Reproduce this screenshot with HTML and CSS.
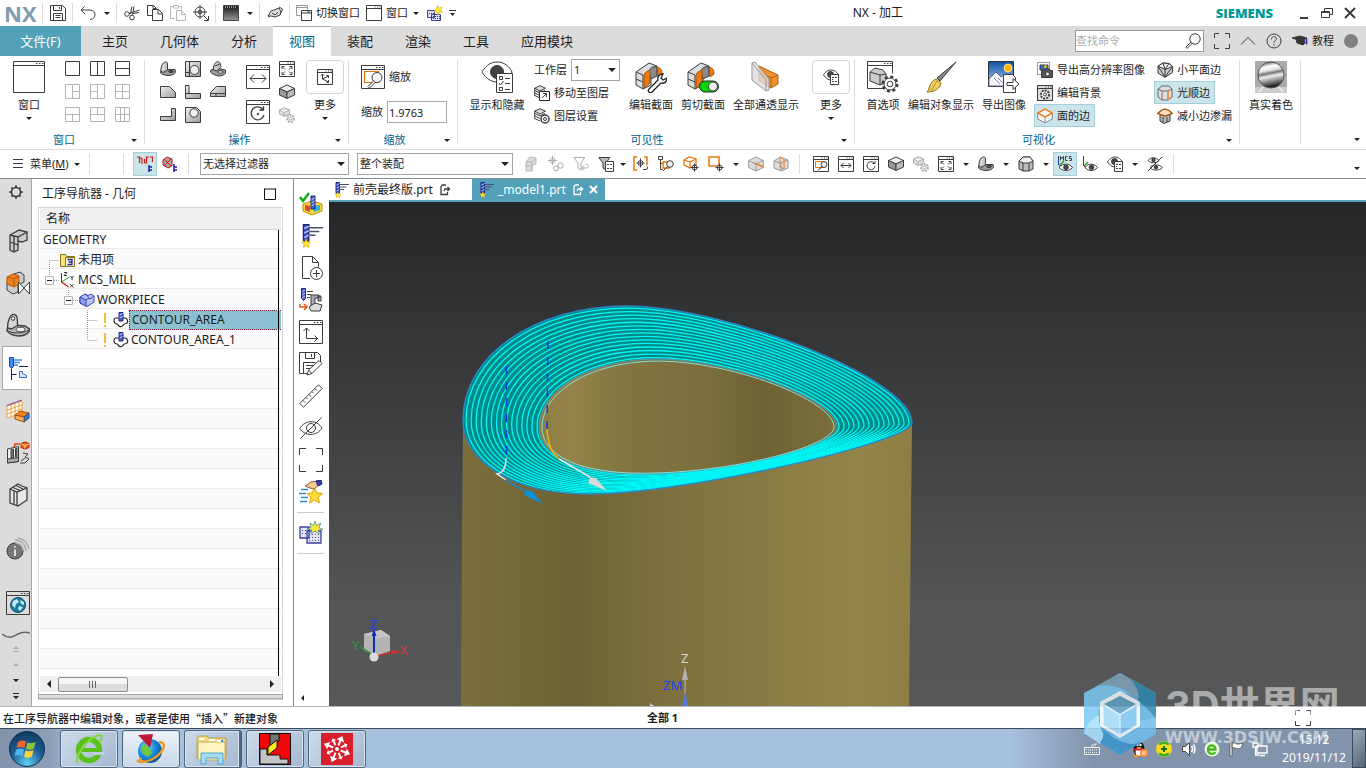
FILE: index.html
```
<!doctype html>
<html lang="zh-CN">
<head>
    <meta charset="UTF-8">
    <meta name="viewport" content="width=device-width, initial-scale=1.0">
    <title>NX - 加工</title>
    <link rel="stylesheet" href="styles.css">
</head>
<body>
<!-- icon sprite -->
<svg class="sprite" aria-hidden="true">
    <defs>
        <linearGradient id="g-dark" x1="0" y1="0" x2="0" y2="1"><stop offset="0" stop-color="#111"/><stop offset="1" stop-color="#999"/></linearGradient>
        <linearGradient id="g-metal" x1="0" y1="0" x2="1" y2="1"><stop offset="0" stop-color="#f2f2f2"/><stop offset="1" stop-color="#9a9a9a"/></linearGradient>
        <linearGradient id="g-sky" x1="0" y1="0" x2="0" y2="1"><stop offset="0" stop-color="#0f4fa8"/><stop offset="1" stop-color="#a9d6f5"/></linearGradient>
        <linearGradient id="g-chrome" x1="0" y1="0" x2=".2" y2="1"><stop offset="0" stop-color="#333"/><stop offset=".25" stop-color="#fff"/><stop offset=".4" stop-color="#ddd"/><stop offset=".5" stop-color="#777"/><stop offset=".62" stop-color="#eee"/><stop offset="1" stop-color="#222"/></linearGradient>
        <radialGradient id="g-orb" cx=".5" cy=".9" r=".9"><stop offset="0" stop-color="#5fd0f5"/><stop offset=".5" stop-color="#1d5f94"/><stop offset="1" stop-color="#12395f"/></radialGradient>
        <radialGradient id="g-globe" cx=".35" cy=".35" r=".8"><stop offset="0" stop-color="#7fd8ff"/><stop offset=".5" stop-color="#1787d8"/><stop offset="1" stop-color="#0a3f86"/></radialGradient>
    </defs>

    <symbol id="frame" viewBox="0 0 24 24"><path d="M.5.5h23v23H.5zM.5 4.5h23"/><path d="M15 2.5h1.5M18 2.5h1.5M21 2.5h1.5"/></symbol>
    <symbol id="frame-s" viewBox="0 0 16 16"><path d="M.5.5h15v15H.5zM.5 3.5h15"/><path d="M8.500 2h1M11 2h1M13.500 2h1"/></symbol>
    <symbol id="frame-l" viewBox="0 0 32 32"><path d="M.5.5h31v31H.5zM.5 4.500h31"/><path d="M23 2.500h1.500M26 2.500h1.500M29 2.500h1.500"/></symbol>

    <symbol id="save" viewBox="0 0 16 16"><path d="M.5.5h12l3 3v12H.5zM3.500.5v5h8v-5M9.500 2v2M3.500 15.500v-7h9v7M5.500 10.500h5M5.500 12.500h5"/></symbol>
    <symbol id="undo" viewBox="0 0 16 16"><path d="M4.500 1.500L1 5l4 4M1 5h9c3.500 0 5 2.500 5 4.500S13.500 14.500 10 14.500"/></symbol>
    <symbol id="cut" viewBox="0 0 16 16"><path d="M8 1.500L6.500 9M15.500 5L5 8.500M10 1.500L8.500 9.500M15 7.500l-6 1"/><circle cx="3" cy="9" r="2.300"/><circle cx="8" cy="12.500" r="2.300"/></symbol>
    <symbol id="copy" viewBox="0 0 16 16"><path d="M5.500 10.500h-5V.5h6l3 3v1M6 .5v3h3"/><path d="M5.500 4.500h6l4 4v7h-10zM11 4.500V9h4.500"/></symbol>
    <symbol id="paste" viewBox="0 0 16 16"><path stroke="#b4b4b4" d="M4.500 13.500h-4v-12h3M9.500 1.500h2v3M3.500.5h5v2.500h-5zM6.500 5.500h5l4 4v6h-9zM11.500 5.500v4h4"/></symbol>
    <symbol id="target" viewBox="0 0 16 16"><circle cx="7" cy="7" r="5"/><circle cx="7" cy="7" r="2"/><path d="M7 0v14M0 7h14M10 10l5 5M15.500 11v4.500H11"/></symbol>
    <symbol id="win-dark" viewBox="0 0 16 16"><path fill="url(#g-dark)" stroke="#444" d="M.5.5h15v15H.5z"/><path stroke="#fff" d="M2 2h12" stroke-dasharray="1 1"/></symbol>
    <symbol id="hand" viewBox="0 0 16 16"><path fill="#ddd" d="M1 11l3-5 3-1 5-2 2 4-1 3-5 2-4-1z"/><path d="M12 2l3.500 2-1.500 4M5 8l3 2 3-3M1 11l2 1"/></symbol>
    <symbol id="switch" viewBox="0 0 16 16"><path stroke="#999" d="M4.500 10.500h-4V.5h11v4M.5 2.500h11"/><path d="M5.500 5.500h10v10h-10zM5.500 8h10M11 7h3" /></symbol>
    <symbol id="newwin" viewBox="0 0 16 16"><path stroke="#3a3f9c" fill="#dfe2f8" d="M.5 5.500h7v7h-7zM4.500 9.500h9v6h-9z"/><path stroke="#3a3f9c" stroke-dasharray="1 1" d="M2 8.500h5M6 11.500h7M6 13.500h7"/><path fill="#ffe43c" stroke="#c9a400" stroke-width=".5" d="M10.500 0l1.200 3L15 2l-1.500 3L16 7.500l-3.500-.3L11 10 9.500 7 6.500 6.500 9 4.500z"/></symbol>
    <symbol id="more" viewBox="0 0 8 8"><path d="M0 1.500h7"/><path fill="#222" stroke="none" d="M1 4h5L3.500 7z"/></symbol>
    <symbol id="expand" viewBox="0 0 16 16"><path d="M.5 5V.5H5M11 .5h4.500V5M15.500 11v4.500H11M5 15.500H.5V11"/></symbol>
    <symbol id="lens" viewBox="0 0 16 16"><circle cx="10" cy="6" r="5.200"/><path d="M6 9L.8 14.200l1.200 1.200L7.300 10.300"/></symbol>
    <symbol id="chevron" viewBox="0 0 16 16"><path d="M1 11.500L8 4.500l7 7"/></symbol>
    <symbol id="help" viewBox="0 0 16 16"><circle cx="8" cy="8" r="7"/><path d="M5.500 6.500c0-4 5-3.500 5-.8C10.500 7.500 8 7.500 8 9.800M8 11v1.500"/></symbol>
    <symbol id="cap" viewBox="0 0 16 16"><path fill="#333" d="M0 5l8-2 7 2-6 3z"/><path fill="#333" d="M4 6l1 4 6 2 2-2-1-4z"/><path stroke="#22a" stroke-width="1.500" d="M14.500 5.500v6"/></symbol>

    <!-- layouts -->
    <symbol id="l1" viewBox="0 0 16 16"><path d="M.5.5h14v14H.5z"/></symbol>
    <symbol id="l2" viewBox="0 0 16 16"><path d="M.5.5h14v14H.5zM7.500.5v14"/></symbol>
    <symbol id="l3" viewBox="0 0 16 16"><path d="M.5.5h14v14H.5zM.5 7.500h14"/></symbol>
    <symbol id="l4" viewBox="0 0 16 16"><path d="M.5.5h14v14H.5zM7.500.5v14M7.500 7.500h7"/></symbol>
    <symbol id="l5" viewBox="0 0 16 16"><path d="M.5.5h14v14H.5zM7.500.5v14M.5 7.500h7"/></symbol>
    <symbol id="l6" viewBox="0 0 16 16"><path d="M.5.5h14v14H.5zM7.500.5v14M.5 7.500h14"/></symbol>
    <symbol id="l7" viewBox="0 0 16 16"><path d="M.5.5h14v14H.5zM.5 7.500h14M7.500 7.500v7"/></symbol>
    <symbol id="l8" viewBox="0 0 16 16"><path d="M.5.5h14v14H.5zM.5 7.500h14M7.500.5v7"/></symbol>
    <symbol id="l9" viewBox="0 0 16 16"><path d="M.5.5h14v14H.5zM.5 7.500h14M5.500.5v14M9.500.5v14"/></symbol>

    <!-- orientation -->
    <symbol id="v-tri" viewBox="0 0 16 16"><path fill="#9a9a9a" d="M.5 10.500l5-2H15l.5 2.500c-1 2.500-4 3.500-7.500 3.500S1.500 13 .5 12z"/><path fill="#c8c8c8" d="M.8 10C1 6 2 1.500 5.500 1c1.500 0 2 .5 2 2v6L3 11.500z"/><path stroke="#eee" d="M3 9c.3-3 .5-5 2-6.500"/><ellipse cx="11" cy="10.500" rx="2.500" ry="1" fill="#555"/></symbol>
    <symbol id="v-top" viewBox="0 0 16 16"><path fill="url(#g-metal)" d="M.5.5h15v15H.5z"/><path d="M4.500.5v15M.5 11.500h4"/><circle cx="9.500" cy="9" r="4.500" fill="#eee"/></symbol>
    <symbol id="v-iso" viewBox="0 0 16 16"><path fill="#9a9a9a" d="M1 9l5-2 9.500 2v3c-1 2-4 3-6.500 3S2 13 .5 11z"/><path fill="#c8c8c8" d="M3.500 9C3 5 5 1 7.500.5c2 0 3 2 3.500 5L7 10z"/><ellipse cx="10.500" cy="11" rx="2.500" ry="1.300" fill="#eee"/><path d="M5 5l5-2"/></symbol>
    <symbol id="v-front" viewBox="0 0 16 16"><path fill="url(#g-metal)" d="M.5 2.500h9l6 6v5H.5z"/></symbol>
    <symbol id="v-left" viewBox="0 0 16 16"><path fill="url(#g-metal)" d="M.5 1.500h3.500v8h11.500v5H.5zM.5 9.500H4"/></symbol>
    <symbol id="v-right" viewBox="0 0 16 16"><path fill="url(#g-metal)" d="M6.500 2.500h9v10H.5v-4z"/><path d="M.5 9.500h15M6 9.500v3"/></symbol>
    <symbol id="v-back" viewBox="0 0 16 16"><path fill="url(#g-metal)" d="M11.500 1.500h4v12H.5v-4h11z"/></symbol>
    <symbol id="v-bottom" viewBox="0 0 16 16"><path fill="url(#g-metal)" d="M.5.5h11l4 4v11H.5z"/><circle cx="9" cy="6" r="4.200" fill="#eee"/></symbol>
    <symbol id="fitwidth" viewBox="0 0 24 24"><use href="#frame"/><path d="M4 13.500h16M8 9.500l-4 4 4 4M16 9.500l4 4-4 4"/></symbol>
    <symbol id="rotate" viewBox="0 0 24 24"><use href="#frame"/><path stroke-width="1.300" d="M17 9.500A6.500 6.500 0 1 0 18 15M17.500 6v4h-4"/><circle cx="12" cy="14" r=".8" fill="#333"/></symbol>
    <symbol id="fit" viewBox="0 0 16 16"><use href="#frame-s"/><path d="M3 8V5.500h2.500M10.500 5.500H13V8M13 11v2.500h-2.500M5.500 13.500H3V11M4 6.500l2 2M12 6.500l-2 2M4 12.500l2-2M12 12.500l-2-2"/></symbol>
    <symbol id="cube" viewBox="0 0 16 16"><path fill="#eee" d="M8 1l7.500 3.500L8 8 .5 4.500z"/><path fill="#999" d="M.5 4.500L8 8v6.500L.5 11z"/><path fill="#bbb" d="M15.500 4.500L8 8v6.500l7.500-3.500z"/></symbol>
    <symbol id="cube-gear" viewBox="0 0 16 16"><g stroke="#b0b0b0"><path fill="#ddd" d="M5.500.7L10.500 3v4L5 9.500.5 7V3zM.5 3L5 5.500 10.500 3M5 5.500v4"/><circle cx="11.500" cy="11.500" r="3.500" fill="#eee" stroke-dasharray="2 1" stroke-width="2"/><circle cx="11.500" cy="11.500" r="1.500" fill="#fff"/></g></symbol>
    <symbol id="axes" viewBox="0 0 16 16"><use href="#frame-s"/><path d="M5.500 5v5l6 3M5.500 10l6-3M4 6.500l1.500-1.500L7 6.500M9.500 13.500h2v-2.500M9.500 6.500h2V9"/></symbol>
    <symbol id="zoom" viewBox="0 0 24 24"><use href="#frame"/><path stroke="#e8770c" stroke-width="1.200" d="M3.500 6.500h14v11h-14z"/><circle cx="16" cy="12.500" r="5" fill="#f4f4f4"/><path fill="#fff" d="M12.500 16L7 21.500l1.500 1.500 5.500-5.500"/></symbol>

    <!-- visibility -->
    <symbol id="eye-list" viewBox="0 0 32 32"><path fill="#fff" d="M1 11C6 3 11 1 16 1s11 2 15 10c-4 7-10 10-15 10S5 18 1 11z"/><circle cx="16" cy="11" r="6.500" fill="#444"/><path fill="#fff" d="M15.500 12.500h16v19h-16z"/><path d="M18.500 15.500h3v3h-3zM24 17.500h5M18 22l1.500 2 3-4M24 22.500h5M18.500 26.500h3v3h-3zM24 28.500h5"/></symbol>
    <symbol id="eye-list-s" viewBox="0 0 16 16"><path fill="#fff" d="M.5 6C3 2 5.500 1 8 1s5 1 7.500 5c-2 3.500-5 5-7.500 5S3 9.500.5 6z"/><circle cx="7.500" cy="5.500" r="3" fill="#444"/><path fill="#fff" d="M7.500 5.500h8v10h-8z"/><path d="M9 8.500h2M12 8.500h2M9 10.500h1M9 12.500h2M12 12.500h2"/></symbol>
    <symbol id="layers-move" viewBox="0 0 16 16"><path fill="#ddd" d="M6 .7l5.500 2.500L6 6 .7 3.200zM.7 5.500L6 8l5-2.500M.7 8L6 10.500M.7 10.500L6 13M.7 3v8"/><path fill="#fff" stroke="#222" d="M5.500 6.500h10v9h-10z"/><path d="M8 13l4-4M9 8.500h3.500V12"/></symbol>
    <symbol id="layers-set" viewBox="0 0 16 16"><path fill="#ddd" d="M6 .7l5.500 2.500L6 6 .7 3.200zM.7 5.500L6 8l5-2.500M.7 8L6 10.500M.7 10.500L6 13M.7 3v8"/><circle cx="11" cy="11" r="4" fill="#fff" stroke-width="1.500"/><circle cx="11" cy="11" r="1.500"/></symbol>
    <symbol id="section" viewBox="0 0 32 32"><path fill="#ddd" d="M1 11L14 2l8 3v8l-6 3v8l-8 4-7-4z"/><path fill="#8a8a8a" d="M14 12c0-6 5-7 8-6v9l-6 3z"/><path d="M1 11l7 3v14M1 18l7 3"/><path fill="#e87a1a" stroke="#a85000" d="M9 15c0-3 3-5 6-6v13l-6 5zM22 6c4 1 5 3 5 7l-4 3z"/></symbol>
    <symbol id="section-edit" viewBox="0 0 32 32"><use href="#section"/><path fill="#fff" stroke="#222" stroke-width="1.300" d="M14 28l9-9c-1-4 2-6 5-6l-2 4 2 2 4-2c0 4-3 6-6 5l-9 9c-2 2-5-1-3-3z"/></symbol>
    <symbol id="section-cut" viewBox="0 0 32 32"><use href="#section"/><rect x="12.500" y="20" width="19" height="11" rx="5.500" fill="#0ad20a" stroke="#222"/><circle cx="26" cy="25.500" r="4.500" fill="#eee"/></symbol>
    <symbol id="translucent" viewBox="0 0 32 32"><path fill="#f09030" stroke="#b86010" d="M9 5l19 9v9l-7 4L9 20z"/><path stroke="#b86010" d="M21 27V17l7-3M9 10l12 7"/><path fill="#ddd" fill-opacity=".8" stroke="#999" d="M2 2l3-1 14 17v11l-3 1L2 19z"/><path stroke="#999" d="M2 2l14 17v11"/></symbol>

    <!-- visualization -->
    <symbol id="prefs" viewBox="0 0 32 32"><path d="M16 27.500H.5V.5h25v12M.5 4.500h25"/><path d="M17 2.500h1.500M20 2.500h1.500M23 2.500h1.500"/><path fill="#ccc" d="M3 11l5-4 8 2 3 4v9l-6 2-10-4z"/><path d="M3 11l10 3 6-1M13 14v10"/><circle cx="23" cy="23" r="7" fill="#fff" stroke-width="3" stroke-dasharray="3 2.500"/><circle cx="23" cy="23" r="6" fill="#fff"/><circle cx="23" cy="23" r="2.800"/></symbol>
    <symbol id="brush" viewBox="0 0 32 32"><path fill="#888" d="M31 1L15 20l-3-3z"/><path fill="#eed060" stroke="#8a6a10" d="M11 18l5 4c-1 6-7 9-14 9 3-3 2-10 9-13z"/><path stroke="#b08a20" d="M12 20c-2 3-3 6-6 9"/></symbol>
    <symbol id="export" viewBox="0 0 32 32"><path fill="url(#g-sky)" stroke="#333" d="M.5.5h25v25H.5z"/><circle cx="20" cy="7" r="4" fill="#ffb400" stroke="#f7e08a"/><path fill="#f4f6fa" stroke="#668" d="M1 18l7-7 5 5 4-3 8 7v5H1z"/><path stroke="#88a" d="M6 17l6 6M10 17l5 5"/><path fill="#fff" d="M15.500 13.500h9l3 3v15h-12z"/><path fill="#fff" d="M19 21.500h6v-4l6 5.500-6 5.500v-4h-6z"/></symbol>
    <symbol id="cam" viewBox="0 0 16 16"><path stroke-dasharray="1 1" d="M.5.5h12v12H.5z"/><path fill="#2a6fc0" d="M3 3h8v5H3z"/><circle cx="8.500" cy="4.500" r="1.500" fill="#ffb400" stroke="none"/><path fill="#555" d="M4.500 8.500h3l1-1.500h4l1 1.500h2v7h-11z"/><circle cx="10.500" cy="12" r="2" fill="#eee"/></symbol>
    <symbol id="bgedit" viewBox="0 0 16 16"><path fill="#ddd" d="M.5.5h15v15H.5z"/><use href="#frame-s"/><circle cx="8" cy="9.500" r="4" fill="#fff" stroke-width="2" stroke-dasharray="2 1"/><circle cx="8" cy="9.500" r="1.500"/></symbol>
    <symbol id="face-edge" viewBox="0 0 16 16"><path fill="#f7f7f7" stroke="#888" d="M.7 5v6L8 15l7.300-4V5L8 9z"/><path stroke="#888" d="M8 9v6"/><path fill="#fff" stroke="#f08020" stroke-width="1.500" d="M.8 5L8 1l7.200 4L8 9z"/></symbol>
    <symbol id="facet" viewBox="0 0 16 16"><path fill="#ccc" d="M6 1l6 .5 3.500 3v6L8 15.300 1 11.200v-7z"/><path fill="#eee" d="M1 4.200L6 1l6 .5 3.500 3L8 7.500z"/><path d="M8 7.500v7.800M1 4.200L8 15M15.500 4.500L8 15M6 1l2 6.500L12 1.500"/></symbol>
    <symbol id="smooth" viewBox="0 0 16 16"><path fill="#ddd" stroke="#666" d="M1 4l4-3h7l3 3v8l-4 3H5l-4-3z"/><path stroke="#666" d="M1 4l4 2h6l4-2"/><path stroke="#f08020" stroke-width="1.500" d="M11 6v9"/><path stroke="#777" d="M5 6v9"/></symbol>
    <symbol id="bleed" viewBox="0 0 16 16"><path fill="#bbb" d="M3 7v6l4 2.500 6-2.500V7"/><path fill="#f8dcc0" stroke="#a04a00" stroke-width="1.300" d="M.8 5.500l3.200-3L8 1l4 1.500 3.200 3L8 8z"/><path d="M6 9v5M10 9v5"/></symbol>
    <symbol id="sphere" viewBox="0 0 32 32"><path fill="#aaa" stroke="none" d="M0 0h32v32H0z"/><path fill="#ccc" stroke="none" d="M0 26h32v6H0z"/><circle cx="16" cy="14" r="13" fill="url(#g-chrome)" stroke="#555"/><path stroke="#eee" stroke-width="1.500" d="M8 26l-4 5M24 26l4 5"/></symbol>

    <!-- selection bar -->
    <symbol id="tree-red" viewBox="0 0 16 16"><path stroke="#d01818" stroke-width="1.200" d="M0 1h2.500v6M5 2v6M3 2h2M7.500 7V3M7.500 7h2V1H12M13 1h2.500v5"/><path stroke="#1c1ca8" stroke-width="1.500" d="M12 9v7M12 11h3M12 14h3"/></symbol>
    <symbol id="tree-red2" viewBox="0 0 16 16"><path fill="#b8a0a0" stroke="#a02020" d="M1 4l4-3 5 2v7l-4 2-5-3z"/><path stroke="#d01818" d="M2 3l7 7M9 3L2 10"/><path stroke="#1c1ca8" stroke-width="1.500" d="M12 8v8M12 11h3M12 14h3"/></symbol>
    <symbol id="s-blocks" viewBox="0 0 16 16"><path fill="#ddd" stroke="#b8b8b8" d="M3 6l4-5 6 1v6l-4 1v6H3z"/><path stroke="#b8b8b8" d="M3 6h6l4-4M9 6v9M3 10h6"/></symbol>
    <symbol id="s-link" viewBox="0 0 16 16"><g stroke="#aaa"><circle cx="4.500" cy="4.500" r="2.500"/><path d="M4.500 0v9M0 4.500h9"/><circle cx="8" cy="12.500" r="2.500"/><circle cx="12.500" cy="9.500" r="2.700"/></g></symbol>
    <symbol id="s-filter" viewBox="0 0 16 16"><g stroke="#aaa"><path d="M.8 1.500h11L8 7v7l-3-2V7zM9.500 12h4c2.500 0 2-4-1-4M11 9.500L9 12l2 2.500"/></g></symbol>
    <symbol id="s-filter2" viewBox="0 0 16 16"><path fill="#bbb" d="M.8 1.500h11L8 7v7l-3-2V7z"/><path fill="#fff" d="M7.500 5.500h8v10h-8z"/><path d="M9 8.500h2M12 8.500h2M9 12.500h2M12 12.500h2"/></symbol>
    <symbol id="s-bracket" viewBox="0 0 16 16"><path stroke="#e8770c" stroke-width="1.500" d="M4 1H1v13h3M11 1h3v8"/><circle cx="7.500" cy="7" r="2.500"/><path d="M7.500 2.500v9M3.500 7h8M10 13.500h3c2 0 2-3 .5-3.500"/></symbol>
    <symbol id="s-tree" viewBox="0 0 16 16"><path d="M.5.5h4v3h-4zM2.500 3.500v10h2M2.500 7.500h2"/><path stroke="#e8770c" stroke-width="1.500" d="M5 6h6v6H5z"/><circle cx="12" cy="8" r="3.300" fill="#eee"/><path d="M9.500 10.500L5 15"/></symbol>
    <symbol id="s-cube" viewBox="0 0 16 16"><path stroke="#e8770c" stroke-width="1.300" d="M1 4l5-3 7 2v6l-6 3-6-3zM1 4l6 2 6-3M7 6v6"/><circle cx="11.500" cy="11.500" r="2.500" fill="#fff"/><path d="M11.500 7.500v8M7.500 11.500h8"/></symbol>
    <symbol id="s-box" viewBox="0 0 16 16"><path stroke="#e8770c" stroke-width="1.500" d="M1 1h10v9H1z"/><circle cx="11.500" cy="11.500" r="2.500" fill="#fff"/><path d="M11.500 7.500v8M7.500 11.500h8"/></symbol>
    <symbol id="s-edge" viewBox="0 0 16 16"><path fill="#ddd" stroke="#999" d="M.7 4.500L8 1l7.300 3.500v7L8 15 .7 11.500z"/><path stroke="#999" d="M.7 4.500L8 8M8 8v7M15 4.500L8 8"/><path stroke="#f08020" stroke-width="1.500" d="M7 7l8 4"/></symbol>
    <symbol id="s-face" viewBox="0 0 16 16"><path fill="#ddd" stroke="#999" d="M1 5l6-4 8 3v8l-7 3-7-3z"/><path stroke="#999" d="M1 5l7 2v8M8 7l7-3"/><path stroke="#f08020" d="M7 1v10l4 2V3z"/></symbol>
    <symbol id="zoom-s" viewBox="0 0 16 16"><use href="#frame-s"/><path stroke="#e8770c" d="M2.500 5.500h9v6h-9z"/><circle cx="11" cy="8.500" r="3" fill="#eee"/><path d="M9 11l-4 3"/></symbol>
    <symbol id="width-s" viewBox="0 0 16 16"><use href="#frame-s"/><path d="M3 9.500h10M5.500 7L3 9.500 5.500 12M10.500 7l2.500 2.500-2.500 2.500"/></symbol>
    <symbol id="rotate-s" viewBox="0 0 16 16"><use href="#frame-s"/><path d="M11 7a4 4 0 1 0 1 3M12 5v2.500H9.500"/></symbol>
    <symbol id="solid" viewBox="0 0 16 16"><path fill="#bbb" d="M1 5l4-4h7l3 4v8l-4 2H5l-4-2z"/><path fill="#eee" d="M1 5l4-4h7l3 4-4 2H5z"/><path d="M5 7v8M11 7v8"/></symbol>
    <symbol id="mcs-eye" viewBox="0 0 16 16"><path d="M1.500 0v9" stroke="#23389c"/><path stroke="#20a030" stroke-width="1.500" d="M2 10l5-5"/><path d="M3.500.5v4M3.500 .5l1.500 2L6.500 .5v4M10.500.5h-2v4h2M14.500.5h-2v2h2v2h-2"/><path fill="#fff" d="M2 11.500C6 7 12 7 15.500 11.500 12 15.500 6 15.500 2 11.500z"/><circle cx="9" cy="11.300" r="2.300" fill="#444"/></symbol>
    <symbol id="csys-eye" viewBox="0 0 16 16"><path stroke="#23389c" d="M1.500 0v10"/><path stroke="#20a030" stroke-width="1.500" d="M2 10l4-4"/><path stroke="#d02020" d="M2 10l3 3"/><path fill="#fff" d="M3 11.500C6 7 12 7 15.500 11.500 12 15.500 6 15.500 3 11.500z"/><circle cx="9.500" cy="11.300" r="2.300" fill="#444"/></symbol>
    <symbol id="no-eye" viewBox="0 0 16 16"><path fill="#fff" d="M1 4.500C4 .8 9 .8 12 4.500 9 7.500 4 7.500 1 4.500zM3 11.500C6 8 12 8 15.500 11.500 12 15 6 15 3 11.500z"/><circle cx="6.500" cy="4" r="1.700" fill="#444"/><circle cx="9" cy="11.300" r="1.700" fill="#444"/><path d="M15 1L1 15"/></symbol>

    <!-- resource bar -->
    <symbol id="gear" viewBox="0 0 24 24"><circle cx="12" cy="12" r="4.500" stroke-width="1.500"/><path stroke-width="2" d="M12 5.500v2M12 16.500v2M5.500 12h2M16.500 12h2M7.500 7.500l1 1M15.500 15.500l1 1M16.500 7.500l-1 1M8.500 15.500l-1 1"/></symbol>
    <symbol id="assembly" viewBox="0 0 24 24"><path fill="#ccc" stroke-width="1.300" d="M4 6l9-5 8 2v8l-5 2-4-1v9l-4 2-4-2z"/><path stroke-width="1.300" d="M4 6l8 2 9-5M12 8v4M4 13l8 3M8 7.500v15"/></symbol>
    <symbol id="constraint" viewBox="0 0 24 24"><path fill="#ccc" d="M8 3l6-2 4 3v7l-6 3v7l-5 2-6-4v-8z"/><path fill="#f08020" stroke="#b85a00" d="M1 6l6-3 6 2v8l-5 3-7-3z"/><path stroke="#b85a00" d="M1 6l7 2 5-3M8 8v8"/><path fill="#fff" d="M12.500 11v12l11-12v12z"/></symbol>
    <symbol id="part" viewBox="0 0 24 24"><path fill="#bbb" stroke-width="1.300" d="M1 16l6-4 12 1 4.500 3v2c-3 4-7 5-11 5S3 21 1 18z"/><path fill="#d4d4d4" stroke-width="1.300" d="M1.500 15C1.500 8 4 1 8.500 1.500c2.500.5 3 3 3 11L5.500 16z"/><circle cx="7" cy="5.500" r="1.800" fill="#fff"/><ellipse cx="14.500" cy="16.500" rx="4.500" ry="2.300" fill="#eee"/><path d="M1 17c4 4 16 4 22 0"/></symbol>
    <symbol id="drill" viewBox="0 0 16 16"><path fill="#3c4cc0" stroke="#1a2880" d="M3 .5h3.500v10.500l-1.700 1.500L3 11z"/><path stroke="#b0bcf8" d="M3.500 3l3-1.500M3.500 6l3-1.500M3.500 9l3-1.500"/><path stroke="#4a5070" d="M7 2.500h9M7 5h6.500M7 7.500h4"/><path fill="#ffe43c" stroke="#d8a800" stroke-width=".5" d="M4.800 10l.8 1.800 2.200.2-1.600 1.500.4 2.200-1.800-1.200L3 15.700l.4-2.200L1.800 12l2.200-.2z"/></symbol>
    <symbol id="opnav" viewBox="0 0 24 24"><path fill="#3c8cf0" stroke="#1a50b0" d="M4.500 1.500h4v9l-2 2-2-2z"/><path stroke="#3c8cf0" stroke-width="1.300" d="M9 4h8M9 6.500h6M9 9h4"/><path stroke="#14145c" d="M6.500 13v11M6.500 18.500h5M14 10.500h9"/><path stroke="#2c6ad0" fill="#dfeaff" d="M14.500 15.500h3v2l4 2v2h-7z"/></symbol>
    <symbol id="machine" viewBox="0 0 24 24"><path fill="#fff" stroke="#f0a040" d="M1 7l15-5v12L1 19z"/><path stroke="#f0a040" d="M1 11l15-5M1 15l15-5M5 6v12M9 4.500v12M13 3v12"/><path stroke="#8040c0" d="M.5 6.500L16 1"/><path fill="#f08020" stroke="#a85000" d="M9 16l5-4 9 2-5 4z"/><path fill="#2c7ae0" stroke="#1a4ea0" d="M18 18l5-4v5l-5 4z"/><path fill="#f6b060" stroke="#a85000" d="M9 16l9 2v5l-9-3z"/></symbol>
    <symbol id="mill" viewBox="0 0 24 24"><path fill="#eee" d="M1.500 8l11-2.500v15l-11 1.500z"/><path fill="#777" d="M5 8.500l2.500-.5v9l-2.500.5zM9.500 7.500l1.500-.3v8.500l-1.500.3z"/><path fill="#aaa" d="M1.500 18l11-1.500v4l-11 1.500z"/><path fill="#f06020" stroke="#b02000" d="M15 2.500l4-1.500 4 1.500v4l-4 1.500-4-1.500z"/><path stroke="#ffd080" d="M15 3l4 1.500 4-1.500M19 4.500v3"/><path stroke="#e04010" stroke-width="1.500" d="M14 3H9l-1 3"/><path d="M17 12l5 1-3 3 4 2-4 4h-5M15 20l4-3"/></symbol>
    <symbol id="books" viewBox="0 0 24 24"><path fill="#e8e8e8" stroke-width="1.300" d="M4 6l8-5 4 2 5 2v12l-9 6-8-3z"/><path stroke-width="1.300" d="M4 6l7 3 10-4M11 9v14M7 4.500l7 3M10 2.500l7 3.500M8 8v13"/></symbol>
    <symbol id="info" viewBox="0 0 24 24"><circle cx="9" cy="14" r="8" fill="#777"/><path stroke="#fff" stroke-width="1.500" d="M9 9v1.500M9 12.500V19"/><path stroke="#aaa" stroke-width="1.300" d="M9 3a11 11 0 0 1 11 11M12 1a13 13 0 0 1 11 11M9 6a8 8 0 0 1 8 8"/></symbol>
    <symbol id="web" viewBox="0 0 24 24"><use href="#frame"/><circle cx="12" cy="14" r="7.500" fill="#1b7d9f" stroke="#0d4e68"/><path fill="#c4e6ef" stroke="none" d="M7 10l4-2 2 3-3 2-1 4-3-3zM14 9l4 2v3l-3-1zM13 15l4 1-3 4-2-2z"/></symbol>
    <symbol id="wave" viewBox="0 0 28 10"><path stroke="#666" stroke-width="1.500" d="M0 4c8 6 12 2 16 0s8-2 12-1"/></symbol>

    <!-- operations bar -->
    <symbol id="verify" viewBox="0 0 24 24"><path fill="#f6d43c" stroke="#c09000" d="M4 12l9-3 10 3v7l-10 4-9-4z"/><path fill="#e04040" stroke="none" d="M6 13l5 1v6l-5-2z"/><path fill="#30b0d8" stroke="none" d="M15 14l6-1v5l-6 2z"/><path fill="#4c5cd0" stroke="#1a2880" d="M12 4h4v13h-4z"/><path stroke="#c8d0ff" d="M12.500 8l3-2M12.500 11l3-2M12.500 14l3-2"/><path stroke="#10b010" stroke-width="2.500" d="M1 5l3 4 6-8"/></symbol>
    <symbol id="newdoc" viewBox="0 0 24 24"><path d="M11 22.500H3.500v-22h10l6 6v5M13.500.5v6h6"/><circle cx="17.500" cy="17.500" r="6" fill="#fff"/><path d="M17.500 14v7M14 17.500h7"/></symbol>
    <symbol id="post" viewBox="0 0 24 24"><path fill="#4c5cd0" stroke="#1a2880" d="M2.500.5h4v10l-2 2-2-2z"/><path stroke="#c8d0ff" d="M3 4l3-2M3 7l3-2M3 10l3-2"/><path d="M8 3.500h6M8 6.500h4M8 9.500h3"/><path fill="#aab" d="M12 7h8v3h-4v8h-4zM19 8h3v5h-3z"/><path fill="#ddd" d="M10 19l6-4 7 2-2 6h-9z"/><path stroke="#e05a10" stroke-width="1.500" d="M1 16v3h6M5 16l3 3-3 3"/></symbol>
    <symbol id="wcs" viewBox="0 0 24 24"><use href="#frame"/><path d="M7.500 8v10.500h11M4.500 11l3-3 3 3M15.500 15.500l3 3-3 3"/></symbol>
    <symbol id="save-edit" viewBox="0 0 24 24"><path d="M8 21.500H.5V.5h18l3 3v7M6.500.5v6h9v-6M12.500 2v3M4.500 21.500v-11h12M7 13.500h7M7 16.500h4"/><path fill="#fff" d="M8 23l1.500-5L20 8.500l3 3L13 21.500z"/><path d="M9.500 18l3.500 3.500"/></symbol>
    <symbol id="ruler" viewBox="0 0 24 24"><path d="M.8 19.500L19.500.8l3.700 3.700L4.500 23.200zM4 16.500l2 2M7 13.500l1.500 1.500M10 10.500l2 2M13 7.500l1.500 1.500M16 4.500l2 2"/></symbol>
    <symbol id="hide" viewBox="0 0 24 24"><path d="M.8 12.500C6 3.500 18 3.500 23 12c-5 8.500-17 8.500-22.200.5z"/><circle cx="12" cy="12" r="4.500"/><path d="M22.500 1.500L1.500 22.500"/></symbol>
    <symbol id="full" viewBox="0 0 24 24"><path d="M.5 7V.5H7M17 .5h6.500V7M23.500 17v6.500H17M7 23.500H.5V17"/></symbol>
    <symbol id="feature" viewBox="0 0 24 24"><path fill="#ffdc3c" stroke="#e0a800" d="M15.500 8l2.300 5 5.700.5-4.500 3.800 1.500 5.700-5-3-5 3 1.500-5.700-4-3.800 5.200-.5z"/><path fill="#f0c890" stroke="#906030" d="M6 6l6-4 6-1 2 4-5 4-4-1z"/><path fill="#3440b0" stroke="#1c2470" d="M17 1l5-1 1 4-4 2z"/><path stroke="#2c8ce0" stroke-width="1.300" d="M2 9.500h7M0 13.500h7M2 17.500h7M1 21.500h7"/></symbol>
    <symbol id="pattern" viewBox="0 0 24 24"><path fill="#dfe2f8" stroke="#3a3f9c" stroke-width="1.300" d="M1 6h9v11H1zM8 10h14v12H8z"/><path stroke="#555" stroke-dasharray="1 2" d="M3 9.500h4M3 12.500h4M10 13.500h11M10 16.500h11M10 19.500h11"/><path fill="#ffe43c" stroke="#3a8a9c" stroke-width=".7" d="M16 0l1.500 4.500L22 2l-2 4.500 4 2-4.500.5L20 13l-4-3-4 3 .5-4L8 8l4-1.500L11 2l3.500 2.500z"/></symbol>

    <!-- tree -->
    <symbol id="folder" viewBox="0 0 16 16"><path fill="#f6e27a" stroke="#8a7420" d="M.5 2.500h5l1 2h8v10H.5z"/><path fill="#fff8c8" stroke="#8a7420" d="M5.500 5.500h9v9h-9z"/><path stroke="#1a28a8" stroke-width="1.300" d="M7.500 7.500h4.500v5H7.500M8.500 10H12"/></symbol>
    <symbol id="mcs" viewBox="0 0 16 16"><path stroke="#2a2a8c" d="M1.500 1v9"/><path stroke="#20a030" d="M1.500 10l8-5"/><path stroke="#d02020" stroke-width="1.500" d="M1.500 10l7 5"/><path d="M4 .5h3l-3 3h3M10.500 4l1.500 2 1.500-2M12 6v2M10 12l3.500 3.500M13.500 12L10 15.500"/></symbol>
    <symbol id="workpiece" viewBox="0 0 16 16"><path fill="#b8c2f4" stroke="#3a48b8" d="M1 5l5-3 3 1.500L12 2l3 2v6l-7 4.500L1 11z"/><path fill="#8c9ae8" stroke="#3a48b8" d="M1 5l6 3v6l-6-3z"/><path stroke="#3a48b8" d="M7 8l3-2 1 1 4-3M6 2l4 3.500"/></symbol>
    <symbol id="contour" viewBox="0 0 16 16"><path fill="#fff" stroke="#222" stroke-width="1.200" d="M2.500 6h10c2.500 1 3 5 .5 5.500-2 0-2 .5-3 2s-4 1.500-4.500 0S4 12 2.500 11.500 0 7 2.500 6z"/><path fill="#4c5cd0" stroke="#1a2880" d="M6 .5h4V9H6z"/><path stroke="#c8d0ff" d="M6.500 3l3-1.500M6.500 6l3-1.500"/></symbol>
    <symbol id="note" viewBox="0 0 12 12"><path stroke-width="1.300" d="M8.500 8v2.500H2v-8l1.500-1.500H7M5 7l1-2h4M8.500 3l2 2-2 2"/></symbol>
</svg>

<header class="titlebar">
    <span class="logo">NX</span>
    <i class="sep"></i>
    <button class="tool" aria-label="保存"><svg class="icon"><use href="#save"/></svg></button>
    <i class="sep"></i>
    <button class="tool" aria-label="撤销"><svg class="icon"><use href="#undo"/></svg></button>
    <button class="drop" aria-label="撤销列表"><i class="caret"></i></button>
    <i class="sep"></i>
    <button class="tool" aria-label="剪切"><svg class="icon"><use href="#cut"/></svg></button>
    <button class="tool" aria-label="复制"><svg class="icon"><use href="#copy"/></svg></button>
    <button class="tool" aria-label="粘贴"><svg class="icon"><use href="#paste"/></svg></button>
    <button class="tool" aria-label="定位"><svg class="icon"><use href="#target"/></svg></button>
    <i class="sep"></i>
    <button class="tool" aria-label="背景"><svg class="icon"><use href="#win-dark"/></svg></button>
    <button class="drop" aria-label="背景列表"><i class="caret"></i></button>
    <i class="sep"></i>
    <button class="tool" aria-label="触控"><svg class="icon"><use href="#hand"/></svg></button>
    <i class="sep"></i>
    <button class="labeled"><svg class="icon"><use href="#switch"/></svg>切换窗口</button>
    <button class="labeled"><svg class="icon"><use href="#frame-s"/></svg>窗口<i class="caret"></i></button>
    <button class="tool" aria-label="新建"><svg class="icon"><use href="#newwin"/></svg></button>
    <button class="tool tool--narrow" aria-label="更多"><svg class="icon icon--8"><use href="#more"/></svg></button>
    <h1 class="titlebar__title">NX - 加工</h1>
    <span class="brand">SIEMENS</span>
    <button class="winbtn" aria-label="最小化"><svg class="icon icon--bold" viewBox="0 0 16 16"><path d="M4 13h8"/></svg></button>
    <button class="winbtn" aria-label="还原"><svg class="icon" viewBox="0 0 16 16"><path d="M2.500 6.500h8v6h-8zM5.500 6V3.500h8v6h-3M2.500 7.500h8"/></svg></button>
    <button class="winbtn" aria-label="关闭"><svg class="icon icon--bold" viewBox="0 0 16 16"><path d="M3 3l10 10M13 3L3 13"/></svg></button>
</header>

<nav class="tabs">
    <a class="tab tab--file" href="#">文件(F)</a>
    <a class="tab" href="#">主页</a>
    <a class="tab" href="#">几何体</a>
    <a class="tab" href="#">分析</a>
    <a class="tab tab--active" href="#">视图</a>
    <a class="tab" href="#">装配</a>
    <a class="tab" href="#">渲染</a>
    <a class="tab" href="#">工具</a>
    <a class="tab" href="#">应用模块</a>
    <div class="tabs__right">
        <label class="search"><input type="text" placeholder="查找命令" aria-label="查找命令"><svg class="icon"><use href="#lens"/></svg></label>
        <button class="tool" aria-label="全屏"><svg class="icon"><use href="#expand"/></svg></button>
        <button class="tool" aria-label="最小化功能区"><svg class="icon"><use href="#chevron"/></svg></button>
        <button class="tool" aria-label="帮助"><svg class="icon"><use href="#help"/></svg></button>
        <button class="labeled"><svg class="icon"><use href="#cap"/></svg>教程</button>
        <i class="dot"></i>
    </div>
</nav>

<section class="ribbon">
    <div class="group group--window">
        <div class="group__body">
            <button class="big"><svg class="icon icon--32"><use href="#frame-l"/></svg>窗口<i class="caret"></i></button>
            <div class="grid3">
                <button aria-label="布局1"><svg class="icon"><use href="#l1"/></svg></button>
                <button aria-label="布局2"><svg class="icon"><use href="#l2"/></svg></button>
                <button aria-label="布局3"><svg class="icon"><use href="#l3"/></svg></button>
                <button aria-label="布局4" disabled><svg class="icon"><use href="#l4"/></svg></button>
                <button aria-label="布局5" disabled><svg class="icon"><use href="#l5"/></svg></button>
                <button aria-label="布局6" disabled><svg class="icon"><use href="#l6"/></svg></button>
                <button aria-label="布局7" disabled><svg class="icon"><use href="#l7"/></svg></button>
                <button aria-label="布局8" disabled><svg class="icon"><use href="#l8"/></svg></button>
                <button aria-label="布局9" disabled><svg class="icon"><use href="#l9"/></svg></button>
            </div>
        </div>
        <div class="group__foot"><span>窗口</span><i class="caret"></i></div>
    </div>

    <div class="group group--ops">
        <div class="group__body">
            <div class="grid3">
                <button aria-label="正三轴测图"><svg class="icon"><use href="#v-tri"/></svg></button>
                <button aria-label="俯视图"><svg class="icon"><use href="#v-top"/></svg></button>
                <button aria-label="正等测图"><svg class="icon"><use href="#v-iso"/></svg></button>
                <button aria-label="左视图"><svg class="icon"><use href="#v-front"/></svg></button>
                <button aria-label="前视图"><svg class="icon"><use href="#v-left"/></svg></button>
                <button aria-label="右视图"><svg class="icon"><use href="#v-right"/></svg></button>
                <button aria-label="后视图"><svg class="icon"><use href="#v-back"/></svg></button>
                <button aria-label="仰视图"><svg class="icon"><use href="#v-bottom"/></svg></button>
            </div>
            <div class="pair">
                <button aria-label="平移"><svg class="icon icon--24"><use href="#fitwidth"/></svg></button>
                <button aria-label="旋转"><svg class="icon icon--24"><use href="#rotate"/></svg></button>
            </div>
            <div class="trio">
                <button aria-label="适合窗口"><svg class="icon"><use href="#fit"/></svg></button>
                <button aria-label="透视"><svg class="icon"><use href="#cube"/></svg></button>
                <button aria-label="设置" disabled><svg class="icon"><use href="#cube-gear"/></svg></button>
            </div>
            <button class="big big--more"><span class="box"><svg class="icon"><use href="#axes"/></svg></span>更多<i class="caret"></i></button>
        </div>
        <div class="group__foot"><span>操作</span><i class="caret"></i></div>
    </div>

    <div class="group group--zoom">
        <div class="group__body">
            <div class="zoom">
                <button class="labeled"><svg class="icon icon--24"><use href="#zoom"/></svg>缩放</button>
                <label>缩放<input type="text" value="1.9763"></label>
            </div>
        </div>
        <div class="group__foot"><span>缩放</span><i class="caret"></i></div>
    </div>

    <div class="group group--visible">
        <div class="group__body">
            <button class="big"><svg class="icon icon--32"><use href="#eye-list"/></svg>显示和隐藏</button>
            <div class="list">
                <label class="layer">工作层<span class="select"><select><option>1</option></select><i class="caret caret--big"></i></span></label>
                <button class="item"><svg class="icon"><use href="#layers-move"/></svg>移动至图层</button>
                <button class="item"><svg class="icon"><use href="#layers-set"/></svg>图层设置</button>
            </div>
            <button class="big"><svg class="icon icon--32"><use href="#section-edit"/></svg>编辑截面</button>
            <button class="big"><svg class="icon icon--32"><use href="#section-cut"/></svg>剪切截面</button>
            <button class="big big--wide"><svg class="icon icon--32"><use href="#translucent"/></svg>全部通透显示</button>
            <button class="big big--more"><span class="box"><svg class="icon"><use href="#eye-list-s"/></svg></span>更多<i class="caret"></i></button>
        </div>
        <div class="group__foot"><span>可见性</span><i class="caret"></i></div>
    </div>

    <div class="group group--visual">
        <div class="group__body">
            <button class="big"><svg class="icon icon--32"><use href="#prefs"/></svg>首选项</button>
            <button class="big big--wide"><svg class="icon icon--32"><use href="#brush"/></svg>编辑对象显示</button>
            <button class="big"><svg class="icon icon--32"><use href="#export"/></svg>导出图像</button>
            <div class="list">
                <button class="item"><svg class="icon"><use href="#cam"/></svg>导出高分辨率图像</button>
                <button class="item"><svg class="icon"><use href="#bgedit"/></svg>编辑背景</button>
                <button class="item item--on"><svg class="icon"><use href="#face-edge"/></svg>面的边</button>
            </div>
            <div class="list">
                <button class="item"><svg class="icon"><use href="#facet"/></svg>小平面边</button>
                <button class="item item--on"><svg class="icon"><use href="#smooth"/></svg>光顺边</button>
                <button class="item"><svg class="icon"><use href="#bleed"/></svg>减小边渗漏</button>
            </div>
        </div>
        <div class="group__foot"><span>可视化</span><i class="caret"></i></div>
    </div>

    <div class="group group--shade">
        <div class="group__body">
            <button class="big"><svg class="icon icon--32"><use href="#sphere"/></svg>真实着色</button>
        </div>
    </div>
    <button class="ribbon__more" aria-label="功能区选项"><i class="caret"></i></button>
</section>

<section class="toolbar">
    <button class="menu"><svg class="icon icon--12" viewBox="0 0 12 12"><path d="M1 1.500h10M1 5.500h10M1 9.500h10"/></svg>菜单(<u>M</u>)<i class="caret"></i></button>
    <i class="sep"></i>
    <i class="sep sep--far"></i>
    <button class="tool tool--on" aria-label="类选择"><svg class="icon"><use href="#tree-red"/></svg></button>
    <button class="tool" aria-label="部件选择"><svg class="icon"><use href="#tree-red2"/></svg></button>
    <i class="sep"></i>
    <span class="select select--filter"><select aria-label="过滤器"><option>无选择过滤器</option></select><i class="caret caret--big"></i></span>
    <span class="select select--scope"><select aria-label="选择范围"><option>整个装配</option></select><i class="caret caret--big"></i></span>
    <button class="tool" aria-label="实体" disabled><svg class="icon"><use href="#s-blocks"/></svg></button>
    <button class="tool" aria-label="关联" disabled><svg class="icon"><use href="#s-link"/></svg></button>
    <button class="tool" aria-label="重置过滤器" disabled><svg class="icon"><use href="#s-filter"/></svg></button>
    <button class="tool" aria-label="过滤器选项"><svg class="icon"><use href="#s-filter2"/></svg></button>
    <button class="drop drop--slim" aria-label="展开"><i class="caret"></i></button>
    <button class="tool" aria-label="捕捉"><svg class="icon"><use href="#s-bracket"/></svg></button>
    <button class="tool" aria-label="在导航器中查找"><svg class="icon"><use href="#s-tree"/></svg></button>
    <button class="tool" aria-label="选择体"><svg class="icon"><use href="#s-cube"/></svg></button>
    <button class="tool" aria-label="矩形选择"><svg class="icon"><use href="#s-box"/></svg></button>
    <button class="drop" aria-label="展开"><i class="caret"></i></button>
    <button class="tool" aria-label="边"><svg class="icon"><use href="#s-edge"/></svg></button>
    <button class="tool" aria-label="面"><svg class="icon"><use href="#s-face"/></svg></button>
    <i class="sep"></i>
    <button class="tool" aria-label="缩放"><svg class="icon"><use href="#zoom-s"/></svg></button>
    <button class="tool" aria-label="平移"><svg class="icon"><use href="#width-s"/></svg></button>
    <button class="tool" aria-label="旋转"><svg class="icon"><use href="#rotate-s"/></svg></button>
    <button class="tool" aria-label="透视"><svg class="icon"><use href="#cube"/></svg></button>
    <button class="tool" aria-label="设置" disabled><svg class="icon"><use href="#cube-gear"/></svg></button>
    <button class="tool" aria-label="适合窗口"><svg class="icon"><use href="#fit"/></svg></button>
    <button class="drop" aria-label="展开"><i class="caret"></i></button>
    <button class="tool" aria-label="视图方向"><svg class="icon"><use href="#v-tri"/></svg></button>
    <button class="drop" aria-label="展开"><i class="caret"></i></button>
    <button class="tool" aria-label="渲染样式"><svg class="icon"><use href="#solid"/></svg></button>
    <button class="drop" aria-label="展开"><i class="caret"></i></button>
    <button class="tool tool--on" aria-label="显示 MCS"><svg class="icon"><use href="#mcs-eye"/></svg></button>
    <button class="tool" aria-label="显示坐标系"><svg class="icon"><use href="#csys-eye"/></svg></button>
    <button class="tool" aria-label="显示和隐藏"><svg class="icon"><use href="#eye-list-s"/></svg></button>
    <button class="drop" aria-label="展开"><i class="caret"></i></button>
    <button class="tool" aria-label="隐藏"><svg class="icon"><use href="#no-eye"/></svg></button>
    <i class="sep"></i>
    <button class="toolbar__more" aria-label="工具条选项"><i class="caret"></i></button>
</section>

<main class="work">
    <nav class="resource">
        <button class="resource__gear" aria-label="资源条选项"><svg class="icon icon--24"><use href="#gear"/></svg></button>
        <button aria-label="装配导航器"><svg class="icon icon--24"><use href="#assembly"/></svg></button>
        <button aria-label="约束导航器"><svg class="icon icon--24"><use href="#constraint"/></svg></button>
        <button aria-label="部件导航器"><svg class="icon icon--24"><use href="#part"/></svg></button>
        <button class="resource__on" aria-label="工序导航器"><svg class="icon icon--24"><use href="#opnav"/></svg></button>
        <button aria-label="加工特征导航器"><svg class="icon icon--24"><use href="#machine"/></svg></button>
        <button aria-label="机床导航器"><svg class="icon icon--24"><use href="#mill"/></svg></button>
        <button aria-label="重用库"><svg class="icon icon--24"><use href="#books"/></svg></button>
        <button class="resource__gap" aria-label="HD3D 工具"><svg class="icon icon--24"><use href="#info"/></svg></button>
        <button class="resource__gap" aria-label="Web 浏览器"><svg class="icon icon--24"><use href="#web"/></svg></button>
        <svg class="icon wave"><use href="#wave"/></svg>
        <svg class="icon scrolls" viewBox="0 0 8 58"><g stroke="none"><path fill="#aaa" d="M1 5h6L4 2zM1 7h6v1H1zM1 22h6l-3-3z"/><path fill="#222" d="M1 35h6l-3 3zM1 49h6v1H1zM1 52h6l-3 3z"/></g></svg>
    </nav>

    <aside class="navigator">
        <div class="navigator__head">
            <h2>工序导航器 - 几何</h2>
            <button aria-label="最大化"><svg class="icon icon--12" viewBox="0 0 12 12"><path stroke="#111" d="M.5 1h11M.5.5v11h11V.5"/></svg></button>
        </div>
        <div class="navigator__frame">
            <div class="navigator__view">
                <table class="tree">
                    <thead><tr><th>名称</th></tr></thead>
                    <tbody>
                        <tr><td><div class="node node--root">GEOMETRY</div></td></tr>
                        <tr><td><div class="node"><svg class="lines lines--1" viewBox="0 0 20 20"><path d="M9.500 10v10M9.500 10.500h9"/></svg><svg class="icon"><use href="#folder"/></svg>未用项</div></td></tr>
                        <tr><td><div class="node"><svg class="lines lines--1" viewBox="0 0 20 20"><path d="M9.500 0v6M14 10.500h5"/><path class="toggle" d="M5.500 6.500h8v8h-8z"/><path class="minus" d="M7 10.500h5"/></svg><svg class="icon"><use href="#mcs"/></svg>MCS_MILL</div></td></tr>
                        <tr><td><div class="node"><svg class="lines lines--2" viewBox="0 0 39 20"><path d="M28.500 0v6M33 10.500h5"/><path class="toggle" d="M24.500 6.500h8v8h-8z"/><path class="minus" d="M26 10.500h5"/></svg><svg class="icon"><use href="#workpiece"/></svg>WORKPIECE</div></td></tr>
                        <tr><td><div class="node"><svg class="lines lines--3" viewBox="0 0 73 20"><path d="M47.500 0v20M47.500 10.500h9"/><path class="bang" d="M65 3v10M65 15v2"/></svg><svg class="icon"><use href="#contour"/></svg><span class="picked">CONTOUR_AREA</span></div></td></tr>
                        <tr><td><div class="node"><svg class="lines lines--3" viewBox="0 0 73 20"><path d="M47.500 0v10M47.500 10.500h9"/><path class="bang" d="M65 3v10M65 15v2"/></svg><svg class="icon"><use href="#contour"/></svg>CONTOUR_AREA_1</div></td></tr>
                    </tbody>
                </table>
            </div>
            <div class="hscroll">
                <button aria-label="向左"><i class="arrow arrow--left"></i></button>
                <span class="hscroll__thumb"></span>
                <button aria-label="向右"><i class="arrow arrow--right"></i></button>
            </div>
            <div class="navigator__strip"></div>
        </div>
    </aside>

    <nav class="opbar">
        <button aria-label="确认刀轨"><svg class="icon icon--24"><use href="#verify"/></svg></button>
        <button aria-label="创建工序"><svg class="icon icon--24"><use href="#drill"/></svg></button>
        <button aria-label="新建"><svg class="icon icon--24"><use href="#newdoc"/></svg></button>
        <button aria-label="后处理"><svg class="icon icon--24"><use href="#post"/></svg></button>
        <button aria-label="坐标系"><svg class="icon icon--24"><use href="#wcs"/></svg></button>
        <button aria-label="另存"><svg class="icon icon--24"><use href="#save-edit"/></svg></button>
        <button aria-label="测量"><svg class="icon icon--24"><use href="#ruler"/></svg></button>
        <button aria-label="隐藏"><svg class="icon icon--24"><use href="#hide"/></svg></button>
        <button aria-label="全屏"><svg class="icon icon--24"><use href="#full"/></svg></button>
        <button aria-label="快速特征"><svg class="icon icon--24"><use href="#feature"/></svg></button>
        <hr>
        <button aria-label="阵列"><svg class="icon icon--24"><use href="#pattern"/></svg></button>
        <hr>
        <i class="arrow arrow--left opbar__fold"></i>
    </nav>

    <section class="stage">
        <div class="docs">
            <a class="doc" href="#"><svg class="icon"><use href="#drill"/></svg>前壳最终版.prt<svg class="icon icon--12"><use href="#note"/></svg></a>
            <div class="doc doc--on"><svg class="icon"><use href="#drill"/></svg>_model1.prt<svg class="icon icon--12"><use href="#note"/></svg><button aria-label="关闭"><svg class="icon icon--12" viewBox="0 0 12 12"><path stroke-width="2" d="M2 2l7 7M9 2L2 9"/></svg></button></div>
        </div>
        <svg class="scene" viewBox="329 202 1037 504" preserveAspectRatio="xMinYMin slice">
            <defs>
                <linearGradient id="wall" gradientUnits="userSpaceOnUse" x1="461" y1="0" x2="912" y2="0">
                    <stop offset="0" stop-color="#7b6e3b"/><stop offset=".25" stop-color="#6e6234"/><stop offset=".45" stop-color="#7d703d"/><stop offset=".6" stop-color="#857741"/><stop offset=".88" stop-color="#958449"/><stop offset="1" stop-color="#8f7e44"/>
                </linearGradient>
                <linearGradient id="bore" gradientUnits="userSpaceOnUse" x1="540" y1="0" x2="837" y2="0">
                    <stop offset="0" stop-color="#8f7e45"/><stop offset=".1" stop-color="#958449"/><stop offset=".28" stop-color="#827540"/><stop offset=".55" stop-color="#7c6f3d"/><stop offset=".75" stop-color="#6e6234"/><stop offset="1" stop-color="#7c6f3c"/>
                </linearGradient>
            </defs>
            <path fill="url(#wall)" d="M463 420L461 706h448l3-283z"/>
            <path id="rim-top" fill="#008a88"/>
            <g id="passes" fill="none" stroke="#00f6f6" stroke-width="1.300"></g>
            <path id="rim-outer" fill="none" stroke="#2a86c0" stroke-width="1.500"/>
            <path id="rim-inner" fill="url(#bore)" stroke="#4f9db0"/>
            <path id="rim-lip" fill="none" stroke="#7fe0d8"/>
            <g fill="none">
                <path stroke="#1038e8" stroke-width="1.500" stroke-dasharray="8 8" d="M506.500 366v92M548 341l-1 88"/>
                <path stroke="#e4e4e4" stroke-width="1.500" d="M506 458c0 9-3 15-9 16l9 6M559 459l31 18"/>
                <path stroke="#f0b010" stroke-width="1.500" d="M547 429c1 15 4 23 12 30"/>
                <path stroke="#1c86c8" stroke-width="1.500" d="M505 480l20 11"/>
            </g>
            <path fill="#0f8fd4" d="M524 495l2-5 6 1 11 13z"/>
            <path fill="#d8d8d8" d="M588 483l2-6 6 1 11 13z"/>

            <g class="triad">
                <path fill="#b4b4b4" d="M364 634l17-4 9 6v15l-13 5-13-5z"/>
                <path fill="#c6c6c6" d="M364 634l17-4 9 6-13 2z"/>
                <path stroke="#0c2cc8" stroke-width="2" d="M374 656v-24"/>
                <path fill="#0c2cc8" d="M371.500 636l2.500-7 2.500 7z"/>
                <path stroke="#d03030" stroke-width="1.500" d="M376 656l18-4"/>
                <path fill="#d03030" d="M392 650l8 1-7 4z"/>
                <path stroke="#2c8c34" stroke-width="1.500" d="M373 655l-13-8"/>
                <circle cx="374" cy="657" r="4.500" fill="#dcdcdc"/>
                <text x="370" y="629" fill="#2040ff">Z</text>
                <text x="352" y="650" fill="#30a038">Y</text>
                <text x="400" y="655" fill="#e03838">X</text>
            </g>
            <g class="triad">
                <path stroke="#b8b8b8" d="M685 694v-20"/>
                <path fill="#b0b0b0" d="M682 680l3-14 3 14z"/>
                <path fill="#5878d8" d="M682 706l3-15 3 15z"/>
                <text x="681" y="663" fill="#d4d4d4">Z</text>
                <text x="663" y="690" fill="#2040ff">ZM</text>
                <path fill="#ccc" d="M650 703l4 3h-4z"/>
            </g>
        </svg>
    </section>
</main>

<footer class="status">
    <p>在工序导航器中编辑对象，或者是使用“插入”新建对象</p>
    <p class="status__mid">全部 1</p>
    <button aria-label="全屏"><svg class="icon"><use href="#expand"/></svg></button>
</footer>

<footer class="taskbar">
    <button class="start" aria-label="开始"><svg viewBox="0 0 36 36"><circle cx="18" cy="18" r="17.500" fill="url(#g-orb)" stroke="#0f3050"/><path fill="#f0642c" d="M9 11c3-2 5-2 8-.5L15.500 17c-3-1.500-5-1.500-8 0z"/><path fill="#8cc83c" d="M18.500 11.500c3 1 5 1 8-.5L25 17.500c-3 1.500-5 1.500-8 .5z"/><path fill="#4cb4f0" d="M7 19c3-2 5-2 8-.5L13.500 25c-3-1.500-5-1.500-8 0z"/><path fill="#ffd23c" d="M16.500 19.500c3 1 5 1 8-.5L23 25.500c-3 1.500-5 1.500-8 .5z"/></svg></button>
    <button class="task" aria-label="浏览器"><svg viewBox="0 0 32 32"><circle cx="16" cy="17" r="10.500" stroke="#5cc01c" stroke-width="5.500"/><path stroke="#5cc01c" stroke-width="4" d="M9 17h17"/><path stroke="#c0d0e2" stroke-width="3" d="M19 20.500h12"/><path stroke="#84d83c" stroke-width="2" d="M5 30C0 26 14 5 26 2c4-.500 3 4 1 7"/></svg></button>
    <button class="task task--on" aria-label="NX"><svg viewBox="0 0 32 32"><circle cx="15" cy="18" r="12" fill="url(#g-globe)"/><path fill="#6cc83c" d="M6 14l4-3 5 5 2 4-4 4-5-3z"/><path stroke="#f09820" stroke-width="2.500" d="M3 28c8 3 20-3 25-12 2-5 0-7-4-7"/><path fill="#f09820" d="M1 28l6-4v7z"/><path fill="#c01838" d="M3 2l15-1-3 14z"/></svg></button>
    <button class="task task--stack" aria-label="资源管理器"><svg viewBox="0 0 32 32"><path fill="#f4dc8c" stroke="#b89840" d="M1 5l2-2h8l2 2h17v20H1z"/><path fill="#fff4c0" stroke="#c8a850" d="M2 9h27v18H2z"/><path stroke="#fff" stroke-width="2" d="M4 6h4M13 7h6M21 8h6"/><path stroke="#2c8ce0" stroke-width="2" d="M25 8h2"/><path fill="#a4dcf4" stroke="#4ca4d0" d="M5 31V20h22v11h-5v-6H10v6z"/></svg></button>
    <button class="task" aria-label="数控车"><svg viewBox="0 0 32 32"><path fill="#f00808" stroke="#111" d="M.5.5h31v31H.5z"/><path fill="#777" stroke="#111" d="M11 1h9v7l-9 7z"/><path fill="#c4c4c4" stroke="#111" d="M1 16h7v6h13v4h8v5H1z"/><path fill="#ffe818" stroke="#111" d="M9 14l9-7v8l-9 7z"/></svg></button>
    <button class="task" aria-label="工具箱"><svg viewBox="0 0 32 32"><path fill="#d8202c" d="M0 0h32v32H0z"/><g transform="rotate(22 16 16)"><path stroke="#fff" stroke-width="2" d="M16 6v6M16 20v6M6 16h6M20 16h6M10 10l3 3M19 19l3 3M22 10l-3 3M10 22l3-3"/><path fill="#fff" d="M12 7l4-5 4 5zM12 25l4 5 4-5zM7 12l-5 4 5 4zM25 12l5 4-5 4zM8 8h4l-4 4zM24 8h-4l4 4zM8 24h4l-4-4zM24 24h-4l4-4z"/><circle cx="16" cy="16" r="2" fill="#fff"/></g></svg></button>
    <div class="tray">
        <svg viewBox="0 0 16 16"><path fill="none" stroke="#eee" d="M.5 6.500h15v7H.5zM8 6V4h4V2"/><path stroke="#eee" stroke-dasharray="1 1" d="M2 9h12M2 11.500h12"/></svg>
        <svg viewBox="0 0 16 16"><path fill="#8cdcff" d="M4 10h8L8 6z"/></svg>
        <svg viewBox="0 0 16 16"><ellipse cx="7" cy="8" rx="5.500" ry="7.500" fill="#111"/><ellipse cx="7" cy="11" rx="3.500" ry="4" fill="#fff"/><path fill="#e02020" d="M2 7.500h10v2H2z"/><circle cx="5.500" cy="4" r="1.200" fill="#fff"/><circle cx="8.500" cy="4" r="1.200" fill="#fff"/><path fill="#f0a020" d="M4 6h6L7 7.500zM2 14h5v2H2z"/><circle cx="12" cy="12" r="4" fill="#f88c3c"/><path stroke="#fff" d="M10 11h4M10 13h4"/></svg>
        <svg viewBox="0 0 16 16"><circle cx="8" cy="8" r="8" fill="#f8d818"/><path fill="#38b030" d="M2 3a8 8 0 0 1 12 0L8 6zM2 13a8 8 0 0 0 12 0L8 10z"/><circle cx="8" cy="8" r="5" fill="#f8e020"/><path stroke="#107010" stroke-width="2" d="M8 5v6M5 8h6"/></svg>
        <svg viewBox="0 0 16 16"><path fill="#fff" stroke="#444" d="M2.500 5.500h3l4-4v13l-4-4h-3z"/><path fill="none" stroke="#fff" stroke-width="1.500" d="M11.500 5c1.500 2 1.500 4 0 6M13.500 3.500c2 3 2 6 0 9"/></svg>
        <svg viewBox="0 0 16 16"><circle cx="8" cy="8" r="7.500" fill="#eaf8e0"/><path fill="none" stroke="#48b818" stroke-width="2.300" d="M4 8.500h7.500C11.500 3 4 3 4 8.500s6 5 7.500 2.500"/></svg>
        <svg viewBox="0 0 16 16"><path fill="#fff" stroke="#444" stroke-width=".7" d="M2 1h2v14H2zM4 2c4-1 4 2 7 1l4-1-2 5c-4 2-5-1-9 0z"/></svg>
        <svg viewBox="0 0 16 16"><path fill="#8a98ac" stroke="#fff" stroke-width="1.300" d="M5 5h10v7H5zM8 14.500h5M1 2h5v4H1zM3.500 6v8h4"/></svg>
    </div>
    <div class="clock"><time>15:12</time><time>2019/11/12</time></div>
    <button class="desktop" aria-label="显示桌面"></button>
</footer>

<div class="watermark">
    <svg viewBox="0 0 72 82"><path fill="#5cb0dc" d="M36 0l36 20v41L36 82 0 61V20z"/><path fill="#8cb4c8" d="M36 0l19 11c-13-4-27-3-41 2z"/><path fill="#7fa4b8" d="M14 13l22-13 10 6c7 6 10 14 8 22C45 16 30 11 14 13z"/><path fill="#2f88b0" d="M46 6l26 14v26C66 38 60 32 54 28c2-8-2-16-8-22z"/><path fill="#7ccaf4" d="M0 20l14-7c12-2 25 1 32 8-18-3-31 8-32 22L0 60z"/><path fill="#a8e0fc" d="M0 60c4-10 9-16 15-18-1 12 4 20 11 28l-10 1z"/><path fill="#70bcec" d="M72 44v17L55 71c-11 2-19-2-29-9 18 2 30-4 30-14z"/><path fill="#3c94cc" d="M16 70c4-6 4-10 2-14 12 11 24 16 37 15L36 82z"/><path fill="#fff" fill-opacity=".9" d="M16 29l20-11 20 11v24L36 65 16 53z"/><path fill="#5ca0c0" d="M20 31l16-8 16 8-16 10z"/><path fill="#a0d8f8" d="M19.500 32.500L35.500 42v19l-16-9z"/><path fill="#7cc4f0" d="M36.500 42l16-9.500V52l-16 9z"/></svg>
    <div><strong>3D世界网</strong><span>WWW.3DSJW.COM</span></div>
</div>
<script src="script.js"></script>
</body>
</html>
```
FILE: styles.css
```
/* base */
:root {
    --line: #dcdcdc;
    --teal: #53a0b9;
    --link: #00648c;
    --ink: #1c1c1c;
    --on: #cbe4ea;
    --on-line: #a4d0dc;
}

*,
*::before,
*::after {
    box-sizing: border-box;
    padding: 0;
    margin: 0;
}

body {
    display: flex;
    flex-direction: column;
    height: 100vh;
    overflow: hidden;
    background: #fff;
    color: var(--ink);
    font-family: "Noto Sans", "Noto Sans CJK SC", sans-serif;
    font-size: 11px;
    line-height: 16px;
}

button,
input,
select {
    border: 0;
    background: none;
    color: inherit;
    font: inherit;
}

button {
    white-space: nowrap;
}

a {
    color: inherit;
    text-decoration: none;
}

h1,
h2 {
    font-size: 12px;
    font-weight: 400;
}

.sprite {
    position: absolute;
    width: 0;
    height: 0;
}

.icon {
    display: block;
    flex: none;
    width: 16px;
    height: 16px;
    fill: none;
    stroke: #3c3c3c;
}

.icon--8 { width: 8px; height: 8px; }
.icon--12 { width: 12px; height: 12px; }
.icon--24 { width: 24px; height: 24px; }
.icon--32 { width: 32px; height: 32px; }
.icon--bold { stroke-width: 2; }

.caret {
    border: 3px solid transparent;
    border-top-color: #222;
    border-bottom: 0;
}

.caret--big {
    border-width: 4px;
    border-bottom: 0;
}

.sep {
    width: 1px;
    height: 20px;
    background: var(--line);
}

.tool,
.drop {
    display: flex;
    align-items: center;
    justify-content: center;
    flex: none;
    width: 25px;
    height: 24px;
}

.tool--on {
    border: 1px solid var(--on-line);
    background: var(--on);
}

.drop { width: 15px; }
.drop--slim { width: 10px; }

.labeled {
    display: flex;
    align-items: center;
    gap: 4px;
}

/* title bar */
.titlebar {
    display: flex;
    flex: none;
    align-items: center;
    height: 26px;
    padding-left: 4px;
}

.logo {
    width: 38px;
    color: #7f9cb0;
    font-family: "Open Sans", sans-serif;
    font-size: 22px;
    font-weight: 700;
}

.titlebar .tool { margin: 0 -1px; }
.titlebar .sep + .tool { margin-left: 2px; }
.titlebar .tool + .sep { margin-left: 3px; }
.titlebar .drop + .sep { margin-left: 2px; }
.titlebar .labeled { margin-left: 6px; }
.titlebar .labeled + .tool { margin-left: 3px; }
.titlebar .labeled .caret { margin-left: 1px; }
.titlebar .tool--narrow { width: 16px; }

.titlebar__title {
    flex: 1;
    padding-left: 80px;
    text-align: center;
}

.brand {
    margin-right: 20px;
    color: #009999;
    font-family: "Open Sans", sans-serif;
    font-size: 13px;
    font-weight: 800;
}

.winbtn {
    width: 23px;
    padding-left: 3px;
}

.winbtn:last-child { margin-right: 4px; }

/* tabs */
.tabs {
    display: flex;
    flex: none;
    height: 30px;
    background: var(--line);
    font-size: 13px;
    line-height: 30px;
}

.tab { padding: 0 16px; }

.tab--file {
    width: 81px;
    margin-right: 5px;
    padding: 0;
    background: var(--teal);
    color: #fff;
    text-align: center;
}

.tab--active {
    border-top: 1px solid #aaa;
    background: #fff;
    color: var(--link);
    line-height: 28px;
}

.tabs__right {
    display: flex;
    align-items: center;
    margin-left: auto;
    padding-right: 8px;
    font-size: 11px;
    line-height: 16px;
}

.tabs__right .tool { width: 26px; }
.tabs__right .labeled { margin: 0 10px 0 5px; }

.search {
    display: flex;
    align-items: center;
    width: 129px;
    height: 22px;
    margin-right: 5px;
    padding-right: 2px;
    border: 1px solid #999;
    background: #fff;
}

.search input {
    flex: 1;
    min-width: 0;
}

.search input::placeholder { color: #aaa; }

.dot {
    width: 14px;
    height: 14px;
    border-radius: 50%;
    background: #808080;
}

/* ribbon */
.ribbon {
    display: flex;
    flex: none;
    height: 93px;
}

.group {
    display: flex;
    flex: none;
    flex-direction: column;
    padding-top: 4px;
    background: linear-gradient(var(--line), var(--line)) right 4px / 1px 84px no-repeat;
}

.group--window { width: 145px; padding-left: 5px; }
.group--ops { width: 204px; padding-left: 15px; }
.group--zoom { width: 109px; padding-left: 12px; }
.group--visible { width: 397px; padding-left: 11px; }
.group--visual { width: 385px; padding-left: 4px; }
.group--shade { width: 61px; padding-left: 5px; }

.group__body {
    display: flex;
    flex: 1;
    align-items: flex-start;
}

.group__foot {
    display: flex;
    align-items: center;
    height: 18px;
    padding-right: 8px;
    color: var(--link);
}

.group__foot span {
    flex: 1;
    padding-right: 16px;
    text-align: center;
}

.group--window .group__foot span,
.group--visual .group__foot span { padding-right: 8px; }

.big {
    display: flex;
    flex: none;
    flex-direction: column;
    align-items: center;
    width: 48px;
    padding-top: 1px;
}

.big .icon--32 { margin-bottom: 4px; }
.big .caret { margin-top: 4px; }
.big--wide { width: 70px; }

.big--more {
    width: 38px;
    padding-top: 0;
}

.box {
    display: grid;
    place-items: center;
    width: 38px;
    height: 34px;
    margin-bottom: 3px;
    border: 1px solid #d4d4d4;
    border-radius: 4px;
}

.grid3 {
    display: grid;
    grid-template-columns: repeat(3, 16px);
    grid-auto-rows: 16px;
    gap: 7px 9px;
    padding-top: 1px;
}

button:disabled .icon { stroke: #b4b4b4; }

.group--window .grid3 { margin-left: 12px; }

.pair {
    display: grid;
    gap: 11px;
    margin-left: 20px;
    padding-top: 5px;
}

.trio {
    display: grid;
    gap: 7px;
    margin: 0 11px 0 9px;
    padding-top: 1px;
}

.zoom {
    display: grid;
    gap: 12px;
    padding-top: 5px;
}

.zoom label {
    display: flex;
    align-items: center;
    gap: 4px;
}

.zoom input {
    width: 60px;
    height: 22px;
    padding-left: 1px;
    border: 1px solid #aaa;
}

.list {
    display: flex;
    flex-direction: column;
    align-items: flex-start;
    margin-top: -2px;
}

.group--visible .big:first-child { width: 56px; }
.group--visible .list { width: 89px; margin: -2px 7px 0 6px; }
.group--visible .big + .big { margin-left: 4px; }
.group--visible .big--wide + .big--more { margin-left: 11px; }
.group--visual .big--wide { margin: 0 4px 0 -1px; }
.group--visual .big + .list { width: 117px; margin-left: 6px; }
.group--visual .list + .list { margin-left: 3px; }
.group--shade .big { width: 52px; }

.item {
    display: flex;
    align-items: center;
    gap: 4px;
    height: 23px;
    padding: 0 3px;
    border: 1px solid transparent;
    border-width: 1px 0;
}

.item--on {
    padding: 0 4px 0 2px;
    border: 1px solid var(--on-line);
    background: var(--on);
}

.layer {
    display: flex;
    align-items: center;
    gap: 4px;
    height: 23px;
    padding-left: 3px;
}

.select {
    position: relative;
    display: flex;
    align-items: center;
}

.select select {
    appearance: none;
    width: 49px;
    height: 22px;
    padding-left: 2px;
    border: 1px solid #a4a4a4;
    background: #fff;
}

.select .caret {
    position: absolute;
    right: 4px;
    pointer-events: none;
}

.ribbon__more {
    display: flex;
    flex: 1;
    align-items: flex-end;
    justify-content: flex-end;
    padding: 0 6px 8px 0;
}

/* selection bar */
.toolbar {
    display: flex;
    flex: none;
    align-items: center;
    height: 30px;
    border-top: 1px solid var(--line);
    border-bottom: 1px solid #848b94;
}

.toolbar .sep { margin: 0 8px 0 6px; }

.menu {
    display: flex;
    align-items: center;
    width: 83px;
    padding-left: 12px;
}

.menu .icon { margin-right: 6px; }
.menu .caret { margin-left: 5px; }

.toolbar .sep--far { margin: 0 9px 0 25px; }

.toolbar .tool--on { width: 24px; }

.select--filter { margin: 0 8px 0 3px; }
.select--filter select { width: 149px; }
.select--scope { margin-right: 5px; }
.select--scope select { width: 156px; }

.toolbar__more {
    display: flex;
    align-self: flex-end;
    margin-left: auto;
    padding: 0 6px 8px 0;
}

/* work area */
.work {
    display: flex;
    flex: 1;
    min-height: 0;
}

.resource {
    display: flex;
    flex: none;
    flex-direction: column;
    align-items: center;
    width: 32px;
    overflow: hidden;
    border-right: 1px solid #a8a8a8;
    background: var(--line);
}

.resource button {
    display: grid;
    flex: none;
    place-items: center;
    width: 32px;
    height: 42px;
    padding-left: 4px;
}

.resource .resource__gear {
    height: 26px;
    margin-bottom: 15px;
    padding: 0;
}

.resource .resource__on {
    width: 30px;
    height: 44px;
    margin: 0 -1px 0 1px;
    padding: 0;
    border: 1px solid #a8a8a8;
    border-right: 0;
    background: #fff;
}

.resource .resource__gap { margin-top: 12px; }

.wave {
    width: 28px;
    height: 10px;
    margin-top: 6px;
}

.scrolls {
    width: 8px;
    height: 58px;
    margin-top: 4px;
}

.navigator {
    display: flex;
    flex: none;
    flex-direction: column;
    width: 262px;
    padding: 0 10px 6px 6px;
    border-right: 1px solid #848b94;
}

.navigator__head {
    display: flex;
    align-items: center;
    justify-content: space-between;
    height: 28px;
    padding: 2px 7px 0 4px;
}

.navigator__frame {
    display: flex;
    flex: 1;
    flex-direction: column;
    min-height: 0;
    padding: 0 1px;
    border: 1px solid #d4d4d4;
}

/* zebra continues under the last node */
.navigator__view {
    position: relative;
    flex: 1;
    background: repeating-linear-gradient(#fff 0 19px, #ebebeb 19px 20px, #fafafa 20px 39px, #ebebeb 39px 40px) 0 21px no-repeat;
    font-size: 12px;
}

.navigator__view::after {
    content: "";
    position: absolute;
    top: 22px;
    bottom: 0;
    right: 2px;
    width: 1px;
    background: #000;
}

.tree {
    width: 100%;
    border-collapse: collapse;
}

.tree th {
    height: 21px;
    padding: 2px 0 0 6px;
    border-bottom: 1px solid #d4d4d4;
    background: #efefef;
    font-weight: 400;
    text-align: left;
}

.node {
    display: flex;
    align-items: center;
    height: 20px;
    line-height: 19px;
}

.node--root { padding-left: 3px; }
.node .icon { margin-right: 2px; }

.lines {
    flex: none;
    height: 20px;
    fill: none;
    stroke: #999;
    stroke-dasharray: 1 1;
}

.lines--1 { width: 20px; }
.lines--2 { width: 39px; }
.lines--3 { width: 73px; }

.lines .toggle {
    stroke: #b4b4b4;
    stroke-dasharray: none;
    fill: #fff;
}

.lines .minus {
    stroke: #222;
    stroke-dasharray: none;
}

.lines .bang {
    stroke: #f4bc3c;
    stroke-width: 2;
    stroke-dasharray: none;
}

.picked {
    flex: 1;
    margin-left: -2px;
    padding-left: 2px;
    border: 1px dotted #7a2040;
    border-right: 0;
    background: #8bc1d0;
    line-height: 18px;
}

.hscroll {
    display: flex;
    align-items: center;
    height: 16px;
    background: #efefef;
}

.hscroll button {
    display: grid;
    place-items: center;
    width: 18px;
}

.hscroll button:last-child { margin-left: auto; }

.hscroll__thumb {
    width: 70px;
    height: 15px;
    border: 1px solid #8c8c8c;
    border-radius: 2px;
    background:
        repeating-linear-gradient(90deg, #666 0 1px, transparent 1px 3px) center / 9px 7px no-repeat,
        linear-gradient(#f6f6f6 50%, #dcdcdc 50%);
}

.arrow { border: 4px solid transparent; }
.arrow--left { border-left: 0; border-right-color: #222; }
.arrow--right { border-right: 0; border-left-color: #222; }

.navigator__strip {
    height: 5px;
    margin: 2px -2px 0;
    border: 1px solid #a8a8a8;
    background: var(--line);
}

.opbar {
    display: flex;
    flex: none;
    flex-direction: column;
    align-items: center;
    width: 35px;
    padding: 9px 2px 0 0;
}

.opbar button {
    display: grid;
    flex: none;
    place-items: center;
    width: 32px;
    height: 32px;
}

.opbar hr {
    width: 27px;
    margin: 4px 0;
    border: 0;
    border-top: 1px solid #ccc;
}

.opbar hr + .opbar__fold { margin: auto 0 5px 7px; }

.opbar__fold {
    align-self: flex-start;
    border-width: 3px;
    border-left: 0;
}

.stage {
    display: flex;
    flex: 1;
    flex-direction: column;
    min-width: 0;
}

.docs {
    display: flex;
    flex: none;
    height: 23px;
    border-bottom: 2px solid var(--teal);
    font-size: 12px;
}

.doc {
    display: flex;
    align-items: center;
    gap: 4px;
    width: 143px;
    padding-left: 4px;
}

.doc .icon--12 { margin-left: 2px; }

.doc--on {
    width: 133px;
    padding-left: 6px;
    background: var(--teal);
    color: #fff;
}

.doc--on .icon--12 { stroke: #fff; }
.doc--on button .icon--12 { margin-left: 0; }

.scene {
    flex: 1;
    min-height: 0;
    width: 100%;
    background: linear-gradient(#252627, #3c3d3f 40%, #545557 80%, #565759);
}

.triad {
    fill: none;
    font-size: 13px;
}

/* status */
.status {
    display: flex;
    flex: none;
    align-items: center;
    height: 22px;
    padding: 0 55px 0 3px;
    border-top: 1px solid #b4b4b4;
    font-family: "Noto Sans CJK SC", sans-serif;
    font-weight: 500;
}

.status p:first-child { flex: 644 1 0; }

.status .status__mid {
    flex: 648 1 0;
    font-family: "Noto Sans", "Noto Sans CJK SC", sans-serif;
    font-weight: 700;
}

/* taskbar */
.taskbar {
    display: flex;
    flex: none;
    align-items: center;
    gap: 4px;
    height: 40px;
    border-top: 1px solid #3c4a5c;
    background: linear-gradient(90deg, #7f92a9 0, #8b9fb8 50px, #a7c0dc 80px, #a7c0dc 74%, #8194ac 80%);
}

.start {
    width: 56px;
    padding-left: 9px;
}

.start svg {
    display: block;
    width: 36px;
    height: 36px;
}

.task {
    display: grid;
    place-items: center;
    width: 58px;
    height: 38px;
    border: 1px solid #50647c;
    border-radius: 3px;
    background: linear-gradient(135deg, #cddaea, #a4b8d2);
    box-shadow: inset 0 0 0 1px #d8e4f0;
}

.task--on { background: linear-gradient(#eef3f8, #c8d6e8); }
.task--stack { border-right-width: 3px; }

.task svg {
    width: 32px;
    height: 32px;
    fill: none;
}

.tray {
    display: flex;
    gap: 8px;
    margin-left: auto;
    padding-right: 8px;
}

.tray svg {
    width: 16px;
    height: 16px;
}

.clock {
    display: flex;
    flex-direction: column;
    align-items: center;
    width: 68px;
    color: #fff;
    font-size: 12px;
    line-height: 18px;
}

.desktop {
    width: 14px;
    height: 39px;
    border: 1px solid #3c4a5c;
    background: linear-gradient(135deg, #9aa8b8, #56657a);
}

/* watermark sits over the window corner */
.watermark {
    position: absolute;
    right: 18px;
    bottom: 13px;
    display: flex;
    align-items: center;
    gap: 9px;
    color: #fff;
    pointer-events: none;
}

.watermark svg {
    width: 72px;
    height: 82px;
    opacity: 0.85;
}

.watermark div {
    display: flex;
    flex-direction: column;
    width: 183px;
    padding-top: 4px;
    opacity: 0.5;
}

.watermark strong {
    font-family: "Inter", "Noto Sans CJK SC", sans-serif;
    font-size: 40px;
    font-weight: 700;
    line-height: 44px;
}

.watermark span {
    font-family: "DejaVu Sans", sans-serif;
    font-size: 16px;
    font-weight: 700;
    line-height: 20px;
}
```
FILE: script.js
```
// rim of the cut tube: start point followed by four bezier segments
const OUTER = [463, 420, 463, 355, 535, 306, 627, 306, 720, 306, 912, 377, 912, 423, 912, 442, 685, 494, 590, 494, 510, 494, 463, 460, 463, 420];
const INNER = [539, 427, 539, 390, 590, 359, 657, 359, 730, 359, 837, 399, 837, 427, 837, 446, 730, 474, 640, 474, 575, 474, 539, 455, 539, 427];
const PASSES = 15;

function toPath(p) {
    return `M${p[0]} ${p[1]}` + [2, 8, 14, 20].map((i) => "C" + p.slice(i, i + 6).join(" ")).join("") + "Z";
}

function between(t) {
    return OUTER.map((v, i) => v + (INNER[i] - v) * t);
}

document.getElementById("rim-top").setAttribute("d", toPath(OUTER));
document.getElementById("rim-outer").setAttribute("d", toPath(OUTER));
document.getElementById("rim-inner").setAttribute("d", toPath(INNER));
document.getElementById("rim-lip").setAttribute("d", toPath(between(1.04)));

const passes = document.getElementById("passes");
for (let n = 0; n < PASSES; n++) {
    const path = document.createElementNS("http://www.w3.org/2000/svg", "path");
    path.setAttribute("d", toPath(between((n + 0.6) / PASSES)));
    passes.append(path);
}
```
